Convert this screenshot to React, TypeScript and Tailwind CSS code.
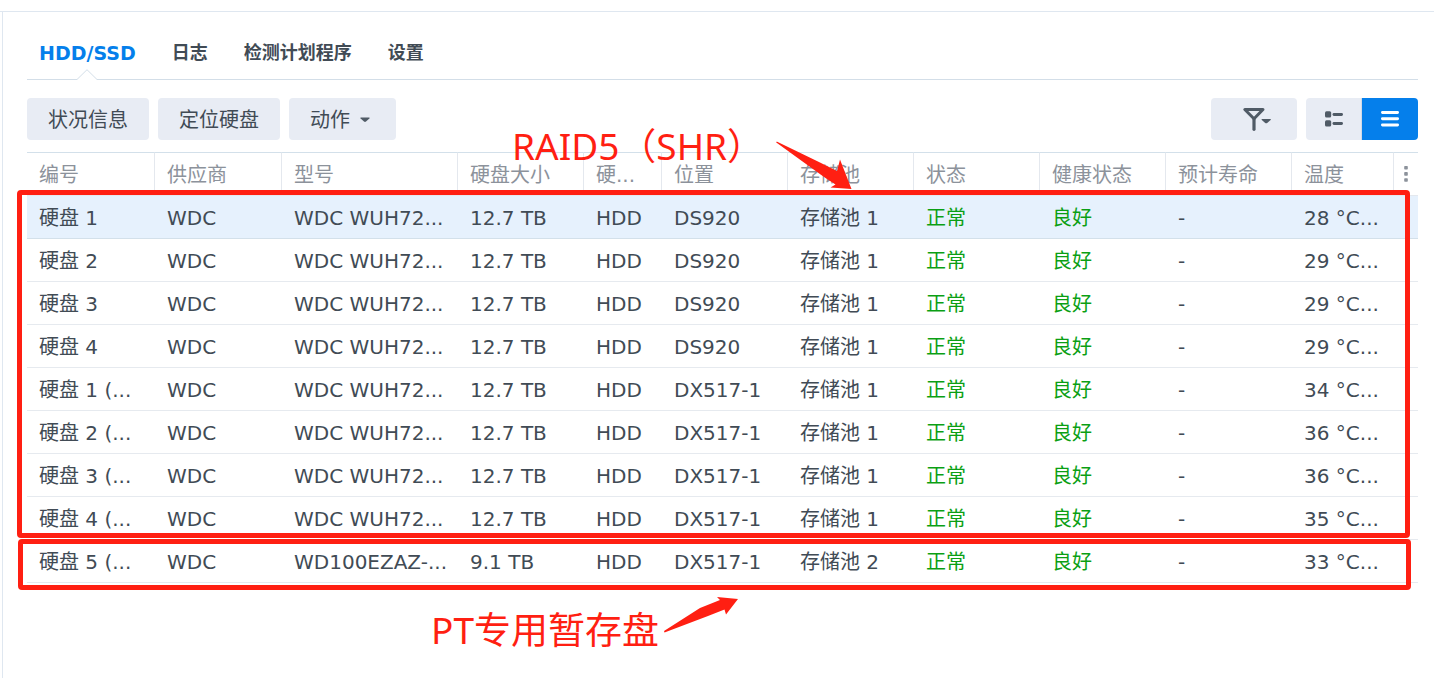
import type { ReactNode } from "react";

const columns = [
  { label: "编号", width: "w-[128px]" },
  { label: "供应商", width: "w-[127px]" },
  { label: "型号", width: "w-[176px]" },
  { label: "硬盘大小", width: "w-[126px]" },
  { label: "硬...", width: "w-[78px]" },
  { label: "位置", width: "w-[126px]" },
  { label: "存储池", width: "w-[126px]" },
  { label: "状态", width: "w-[126px]" },
  { label: "健康状态", width: "w-[126px]" },
  { label: "预计寿命", width: "w-[126px]" },
  { label: "温度", width: "w-[102px]" },
];

const drives = [
  { id: "硬盘 1", model: "WDC WUH72...", size: "12.7 TB", place: "DS920", pool: "存储池 1", temp: "28 °C..." },
  { id: "硬盘 2", model: "WDC WUH72...", size: "12.7 TB", place: "DS920", pool: "存储池 1", temp: "29 °C..." },
  { id: "硬盘 3", model: "WDC WUH72...", size: "12.7 TB", place: "DS920", pool: "存储池 1", temp: "29 °C..." },
  { id: "硬盘 4", model: "WDC WUH72...", size: "12.7 TB", place: "DS920", pool: "存储池 1", temp: "29 °C..." },
  { id: "硬盘 1 (...", model: "WDC WUH72...", size: "12.7 TB", place: "DX517-1", pool: "存储池 1", temp: "34 °C..." },
  { id: "硬盘 2 (...", model: "WDC WUH72...", size: "12.7 TB", place: "DX517-1", pool: "存储池 1", temp: "36 °C..." },
  { id: "硬盘 3 (...", model: "WDC WUH72...", size: "12.7 TB", place: "DX517-1", pool: "存储池 1", temp: "36 °C..." },
  { id: "硬盘 4 (...", model: "WDC WUH72...", size: "12.7 TB", place: "DX517-1", pool: "存储池 1", temp: "35 °C..." },
  { id: "硬盘 5 (...", model: "WD100EZAZ-...", size: "9.1 TB", place: "DX517-1", pool: "存储池 2", temp: "33 °C..." },
];

const Tabs = () => (
  <nav className="flex gap-9 border-b border-[#d3dee8] pl-3 h-[54px] pt-[14px] font-bold text-[18px] leading-[26px]">
    <a href="#hdd" className="relative text-[#057feb] text-[19px]">
      HDD/SSD
      {/* Notch under the active tab */}
      <svg className="absolute left-1/2 -translate-x-1/2 -bottom-px w-[22px] h-[11px]" viewBox="0 0 22 11">
        <path d="M1 11 V10 L11 0.5 L21 10 V11 Z" fill="#fff" />
        <path d="M0 10.5 H1 L11 0.7 L21 10.5 H22" fill="none" stroke="#d3dee8" />
      </svg>
    </a>
    <a href="#log">日志</a>
    <a href="#schedule">检测计划程序</a>
    <a href="#settings">设置</a>
  </nav>
);

const ToolButton = ({ children }: { children: ReactNode }) => (
  <button
    type="button"
    className="flex items-center h-[42px] px-[21px] pt-0.5 rounded bg-[#e8ecf4] text-[20px] whitespace-nowrap"
  >
    {children}
  </button>
);

const Toolbar = () => (
  <div className="flex gap-[9px] pt-[18px] pb-3">
    <ToolButton>状况信息</ToolButton>
    <ToolButton>定位硬盘</ToolButton>
    <ToolButton>
      动作
      <svg className="ml-[10px] mr-[5px] w-[10px] h-[6px]" viewBox="0 0 10 6">
        <path d="M0.8 0.5 H9.2 Q10 0.7 9.4 1.4 L6 4.6 Q5 5.4 4 4.6 L0.6 1.4 Q0 0.7 0.8 0.5 Z" fill="#505b66" />
      </svg>
    </ToolButton>

    <button
      type="button"
      aria-label="筛选"
      className="flex justify-center items-center ml-auto rounded bg-[#e8ecf4] w-[86px] h-[42px]"
    >
      <svg className="w-[34px] h-6" viewBox="0 0 34 24">
        <path
          d="M7.8 2.5 H26 L17 11.7 Z"
          fill="none"
          stroke="#505b66"
          strokeWidth="3"
          strokeLinejoin="round"
        />
        <path d="M17 12 V22.3" stroke="#505b66" strokeWidth="3.2" strokeLinecap="round" />
        <path d="M25 12 H33.4 Q34.2 12.2 33.6 12.9 L30.2 15.9 Q29.2 16.6 28.2 15.9 L24.8 12.9 Q24.2 12.2 25 12 Z" fill="#505b66" />
      </svg>
    </button>

    <div className="flex rounded overflow-hidden">
      <button
        type="button"
        aria-label="卡片视图"
        className="flex justify-center items-center border-r border-[#d3dae6] bg-[#e8ecf4] w-14 h-[42px]"
      >
        <svg className="w-[18px] h-4" viewBox="0 0 18 16" fill="#505b66">
          <rect x="0" y="0.3" width="6.2" height="6.2" rx="1.5" />
          <rect x="7.5" y="2" width="10.5" height="3" rx="1.4" />
          <rect x="0" y="9.3" width="6.2" height="6.2" rx="1.5" />
          <rect x="7.5" y="11" width="10.5" height="3" rx="1.4" />
        </svg>
      </button>
      <button
        type="button"
        aria-label="列表视图"
        className="flex justify-center items-center bg-[#057feb] w-14 h-[42px]"
      >
        <svg className="w-[18px] h-4" viewBox="0 0 18 16" fill="#fff">
          <rect y="0" width="18" height="3" rx="1.4" />
          <rect y="6.2" width="18" height="3" rx="1.4" />
          <rect y="12.4" width="18" height="3" rx="1.4" />
        </svg>
      </button>
    </div>
  </div>
);

const DriveTable = () => (
  <table className="border-separate border-spacing-0 w-full table-fixed text-[20px] leading-[28px] text-left">
    <thead>
      <tr className="h-11 text-[#8c929b]">
        {columns.map((col) => (
          <th
            key={col.label}
            className={`${col.width} border-t border-t-[#d3e0ea] border-r border-r-[#e4e8ee] border-b border-b-[#e4e8ee] pt-0.5 pl-3 font-normal whitespace-nowrap overflow-hidden`}
          >
            {col.label}
          </th>
        ))}
        <th className="border-t border-t-[#d3e0ea] border-b border-b-[#e4e8ee] w-6">
          <button type="button" aria-label="列" className="flex justify-center w-full">
            <svg className="w-1 h-4" viewBox="0 0 4 16" fill="#8c929b">
              <rect x="0.2" width="3.6" height="3.6" rx="0.8" />
              <rect x="0.2" y="6.1" width="3.6" height="3.6" rx="0.8" />
              <rect x="0.2" y="12.2" width="3.6" height="3.6" rx="0.8" />
            </svg>
          </button>
        </th>
      </tr>
    </thead>
    <tbody>
      {drives.map((drive, i) => (
        <tr
          key={drive.id}
          className={`h-[43px] whitespace-nowrap *:border-b *:pt-0.5 *:pl-3 ${
            i === 0 ? "bg-[#e6f1fd] *:border-[#d3e0ea]" : "*:border-[#e6eaef]"
          }`}
        >
          <td>{drive.id}</td>
          <td>WDC</td>
          <td>{drive.model}</td>
          <td>{drive.size}</td>
          <td>HDD</td>
          <td>{drive.place}</td>
          <td>{drive.pool}</td>
          <td className="text-[#0b9f14]">正常</td>
          <td className="text-[#0b9f14]">良好</td>
          <td>-</td>
          <td>{drive.temp}</td>
          <td></td>
        </tr>
      ))}
    </tbody>
  </table>
);

/* Red marks laid over the table */
const Annotations = () => (
  <div className="absolute inset-0 font-['Noto_Sans','Noto_Sans_CJK_SC',sans-serif] text-[#ff1f12] text-[37px] leading-[48px] whitespace-nowrap pointer-events-none">
    <div className="absolute -left-[10px] right-2 top-[38px] h-[348px] border-5 border-[#ff1f12] rounded" />
    <div className="absolute -left-[9px] right-[7px] top-[387px] h-[51px] border-5 border-[#ff1f12] rounded" />
    <p className="absolute left-[485px] -top-[30px]">RAID5（SHR）</p>
    <svg className="absolute left-[748px] -top-[12px] w-20 h-[50px]" viewBox="0 0 80 50" fill="#ff1f12">
      <path d="M1.3 2.4 Q0.8 1.4 2.2 1.8 L45 22.5 L62 31 L65 19.5 L76.5 49 L55.5 47.5 L60.5 44.5 Q50 38 40 30.5 Z" />
    </svg>
    <p className="absolute left-[404px] top-[454px]">PT专用暂存盘</p>
    <svg className="absolute left-[636px] top-[444px] w-20 h-10" viewBox="0 0 80 40" fill="#ff1f12">
      <path d="M1 35 L37 12 L57 4 L54 1 L75 3 L63 18.5 L61.5 13.5 L45 20 L1.5 36.5 Z" />
    </svg>
  </div>
);

export default function App() {
  return (
    <div className="flex flex-col bg-white pt-[11px] min-h-screen font-['DejaVu_Sans','Noto_Sans_CJK_SC',sans-serif] text-[#414b55]">
      <div className="flex grow border-t border-[#dfe7f0] pl-[2px]">
        <main className="border-l border-[#dfe7f0] grow pt-[14px] pr-4 pl-6">
          <Tabs />
          <Toolbar />
          <div className="relative">
            <DriveTable />
            <Annotations />
          </div>
        </main>
      </div>
    </div>
  );
}
